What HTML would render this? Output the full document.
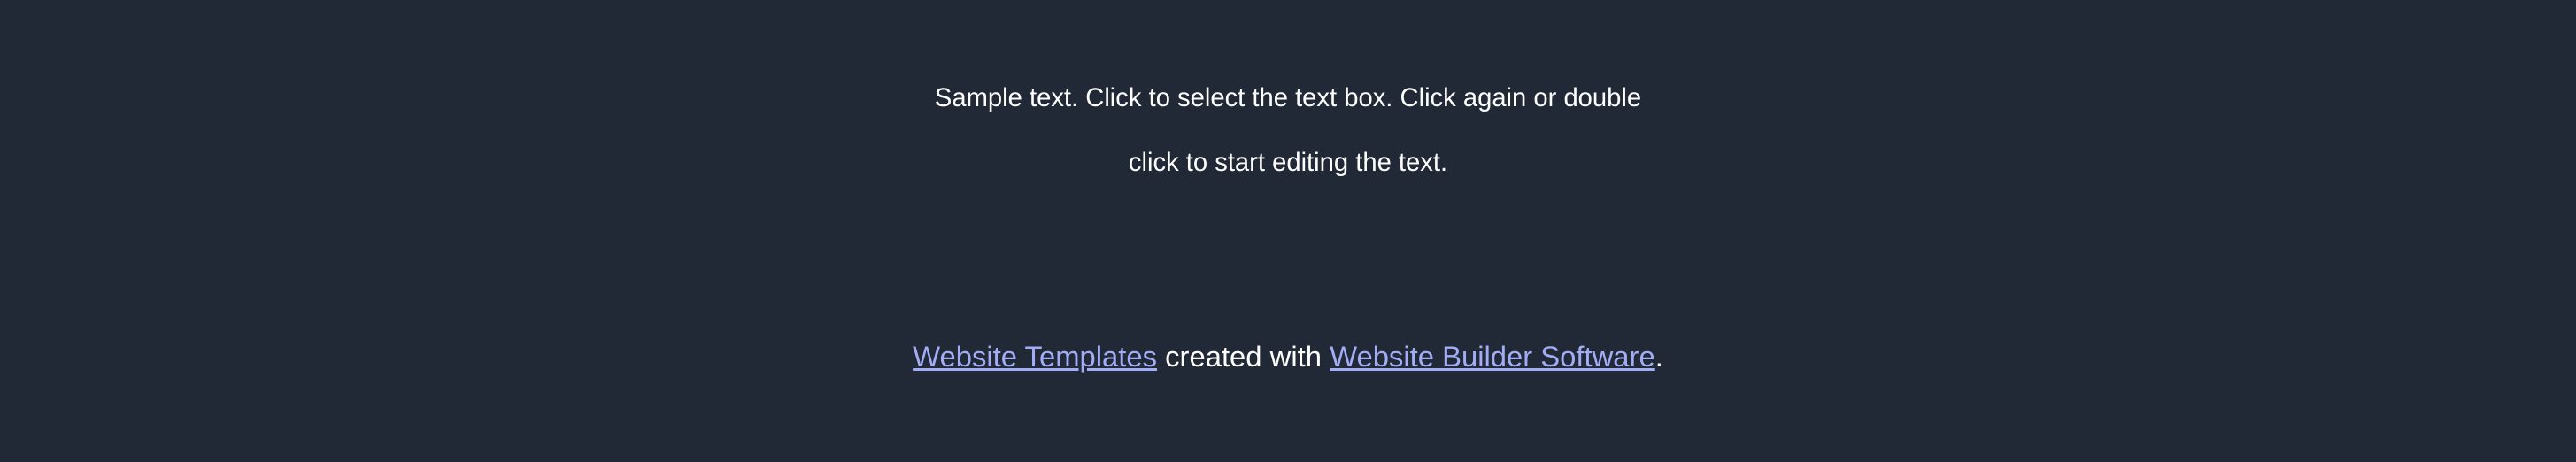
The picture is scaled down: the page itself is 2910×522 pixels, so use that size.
<!DOCTYPE html>
<html><head><meta charset="utf-8"><style>
html,body{margin:0;padding:0;width:2910px;height:522px;background:#212836;overflow:hidden;font-family:"Liberation Sans",sans-serif;color:#fff}
.l{position:absolute;left:0;width:2910px;text-align:center;white-space:nowrap}
.t{font-size:29.2px;line-height:1}
.f{font-size:32.8px;line-height:1}
a{color:#a3adf5;text-decoration:underline}
</style></head><body>
<div class="l t" style="top:97px">Sample text. Click to select the text box. Click again or double</div>
<div class="l t" style="top:170px">click to start editing the text.</div>
<div class="l f" style="top:387px"><a>Website Templates</a> created with <a>Website Builder Software</a>.</div>
</body></html>
